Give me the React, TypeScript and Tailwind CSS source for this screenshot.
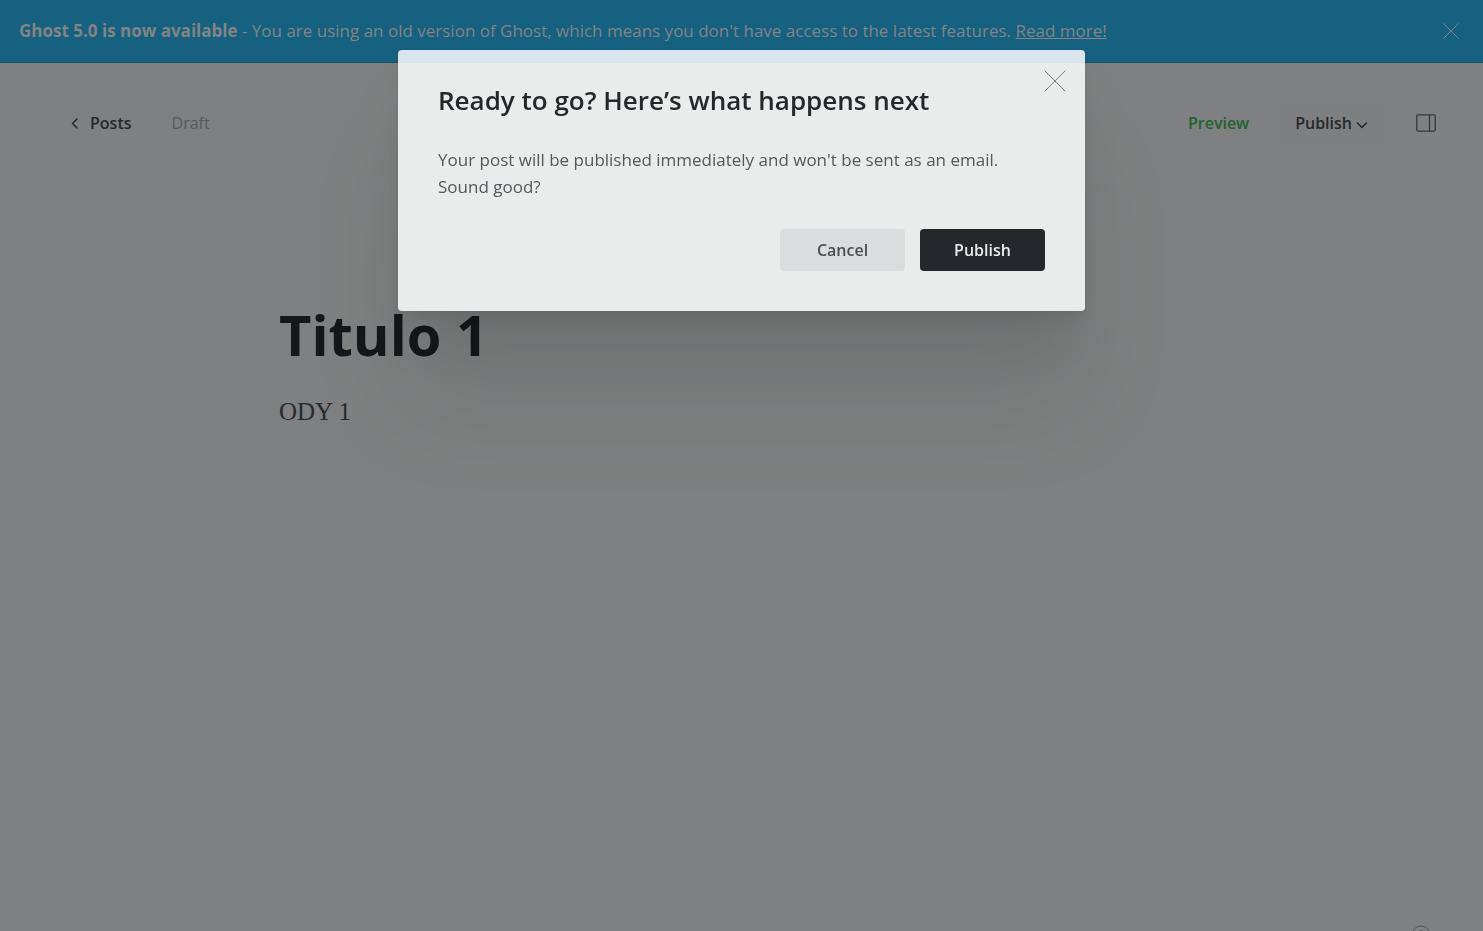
import type { ReactNode } from "react";

function CloseIcon({ className }: { className: string }) {
  return (
    <svg viewBox="0 0 24 24" fill="none" stroke="currentColor" strokeLinecap="round" className={className} aria-hidden="true">
      <path d="M1 1l22 22M23 1L1 23" />
    </svg>
  );
}

function Banner() {
  return (
    <aside className="flex h-[63px] items-center justify-between border-b border-[#0e5170] bg-[#166080] pr-6 pl-[19px] text-[17px] text-[#838485]">
      <p className="leading-6">
        <strong className="font-bold">Ghost 5.0 is now available</strong> - You are using an old version of Ghost, which means you
        don't have access to the latest features.{" "}
        <a href="#upgrade" className="underline">
          Read more!
        </a>
      </p>
      <button type="button" aria-label="Dismiss" className="flex shrink-0">
        <CloseIcon className="size-4 stroke-[1.5]" />
      </button>
    </aside>
  );
}

function EditorHeader() {
  return (
    <header className="flex h-[119px] items-center justify-between pr-[47px] pl-[70px] text-base">
      <div className="flex items-center gap-10">
        <a href="#posts" className="flex items-center gap-3 font-semibold text-[#26282c]">
          <svg viewBox="0 0 8 12" fill="none" stroke="currentColor" strokeWidth="1.5" strokeLinecap="round" strokeLinejoin="round" className="h-3 w-2" aria-hidden="true">
            <path d="M7 2L2.500 6.500L7 11" />
          </svg>
          Posts
        </a>
        <span className="text-[#555a5f]">Draft</span>
      </div>
      <div className="flex items-center">
        <button type="button" className="font-semibold text-[#1e6330]">
          Preview
        </button>
        <button type="button" className="ml-[30px] flex h-10 items-center gap-1 rounded bg-[#7e7f80] px-4 font-semibold text-[#26282c]">
          Publish
          <svg viewBox="0 0 12 12" fill="none" stroke="currentColor" strokeWidth="1.5" strokeLinecap="round" strokeLinejoin="round" className="mt-1 size-3" aria-hidden="true">
            <path d="M1.500 4L6 8.500L10.500 4" />
          </svg>
        </button>
        <button type="button" aria-label="Settings" className="ml-8 text-[#35373b]">
          <svg viewBox="0 0 20 18" fill="none" stroke="currentColor" strokeWidth="1.3" className="h-[18px] w-5" aria-hidden="true">
            <rect x="0.8" y="0.8" width="18.4" height="16.4" rx="1.5" />
            <path d="M13.500 1v16" />
          </svg>
        </button>
      </div>
    </header>
  );
}

function DialogButton({ className, children }: { className: string; children: ReactNode }) {
  return (
    <button type="button" className={`h-[42px] w-[125px] rounded text-base ${className}`}>
      {children}
    </button>
  );
}

function PublishDialog() {
  return (
    <div className="fixed inset-0 flex items-start justify-center pt-[50px]">
      <section
        role="dialog"
        aria-modal="true"
        aria-labelledby="dialog-title"
        className="relative w-full max-w-[687px] rounded bg-white/84 p-10 pt-[30px] shadow-[0_3px_6px_rgba(0,0,0,0.05),0_12px_18px_rgba(0,0,0,0.05),0_40px_60px_rgba(0,0,0,0.06),0_100px_100px_rgba(0,0,0,0.08)]"
      >
        <button type="button" aria-label="Close" className="absolute top-5 right-[19px] text-[#77787a]">
          <CloseIcon className="size-[22px]" />
        </button>
        <h1 id="dialog-title" className="text-[26px] leading-10 font-semibold text-[#26272b]">
          Ready to go? Here’s what happens next
        </h1>
        <p className="mt-[26px] max-w-[580px] text-[17px] leading-[27px] text-[#54585d]">
          Your post will be published immediately and won't be sent as an email. Sound good?
        </p>
        <div className="mt-[29px] flex justify-end gap-[15px]">
          <DialogButton className="bg-[#d9dddd] font-semibold text-[#4a4e54]">Cancel</DialogButton>
          <DialogButton className="bg-[#26272b] font-semibold text-[#ebebeb]">Publish</DialogButton>
        </div>
      </section>
    </div>
  );
}

export default function App() {
  return (
    <div className="min-h-screen overflow-hidden bg-[#7f8081] font-['Open_Sans','Noto_Sans',sans-serif]">
      <Banner />
      <EditorHeader />
      <main className="mx-auto max-w-[925px] pt-[116px]">
        <h2 className="text-[56px] leading-[72px] font-bold text-[#15171a]">Titulo 1</h2>
        <p className="mt-6 font-['Liberation_Serif',Georgia,serif] text-[25px] leading-9 text-[#262b30]">ODY 1</p>
      </main>
      <footer className="fixed right-[52px] -bottom-[14px] flex text-[#4f5559]">
        <button type="button" aria-label="Help">
          <svg viewBox="0 0 20 20" fill="none" stroke="currentColor" className="size-5" aria-hidden="true">
            <circle cx="10" cy="10" r="9" />
            <path d="M7.500 8a2.500 2.500 0 1 1 3.500 2.300c-.7.3-1 .8-1 1.700M10 14v1" />
          </svg>
        </button>
      </footer>
      <PublishDialog />
    </div>
  );
}
